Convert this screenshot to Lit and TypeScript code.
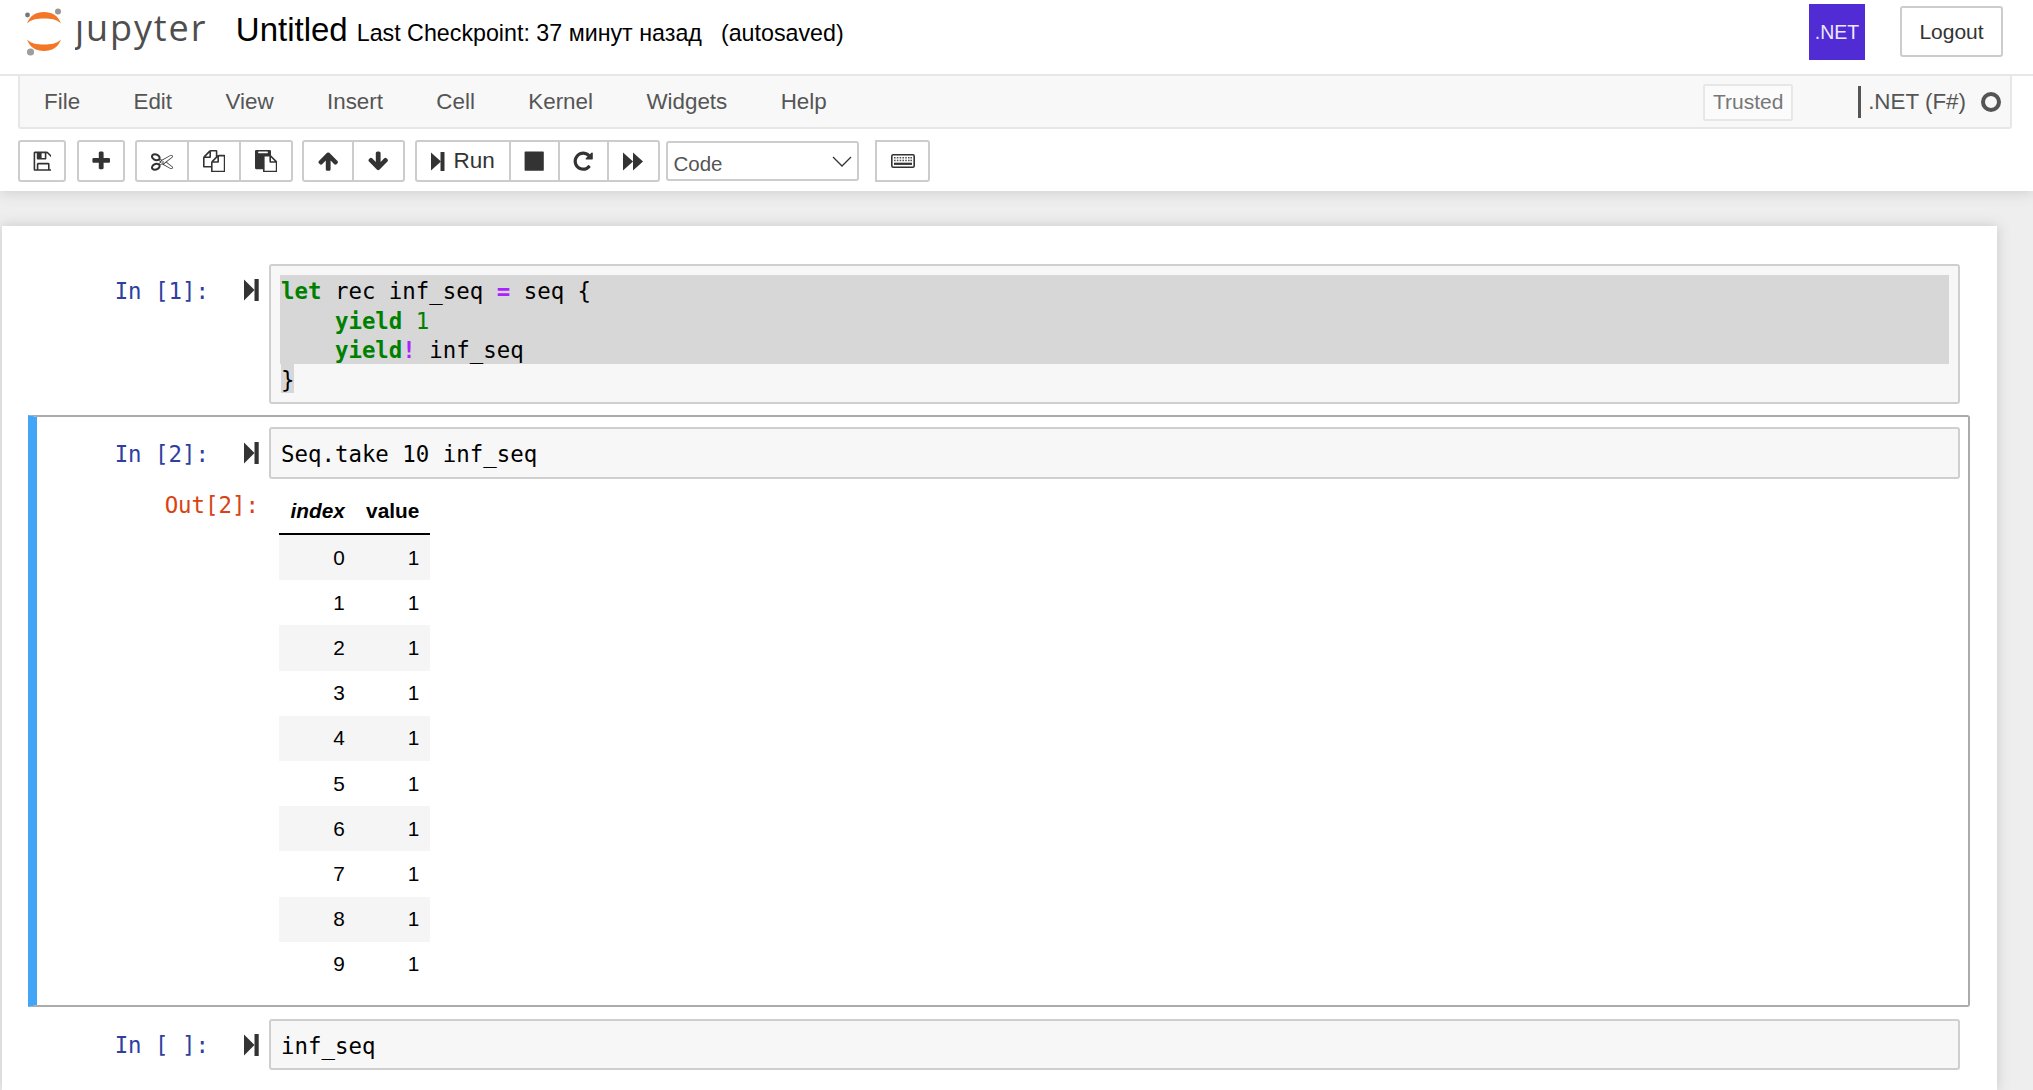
import { LitElement, html, css, svg } from "lit";
import { customElement } from "lit/decorators.js";

const ICONS = {
  save: { vb: "0 0 1536 1792", w: 19.2, d: "M512 1536h768v-384h-768v384zm896 0h128v-896q0-14-10-38.5t-20-34.5l-281-281q-10-10-34-20t-39-10v416q0 40-28 68t-68 28h-576q-40 0-68-28t-28-68v-416h-128v1280h128v-416q0-40 28-68t68-28h832q40 0 68 28t28 68v416zm-384-928v-320q0-13-9.5-22.5t-22.5-9.5h-192q-13 0-22.5 9.5t-9.5 22.5v320q0 13 9.5 22.5t22.5 9.5h192q13 0 22.5-9.5t9.5-22.5zm640 32v928q0 40-28 68t-68 28h-1344q-40 0-68-28t-28-68v-1344q0-40 28-68t68-28h928q40 0 88 20t76 48l280 280q28 28 48 76t20 88z" },
  plus: { vb: "0 0 1792 1792", w: 22.4, d: "M1600 736v192q0 40-28 68t-68 28h-416v416q0 40-28 68t-68 28h-192q-40 0-68-28t-28-68v-416h-416q-40 0-68-28t-28-68v-192q0-40 28-68t68-28h416v-416q0-40 28-68t68-28h192q40 0 68 28t28 68v416h416q40 0 68 28t28 68z" },
  cut: { vb: "0 0 1792 1792", w: 22.4, d: "M960 896q26 0 45 19t19 45-19 45-45 19-45-19-19-45 19-45 45-19zm300 64l507 398q28 20 25 56-5 35-35 51l-128 64q-13 7-29 7-17 0-31-8l-690-387-110 66q-8 4-12 5 14 49 10 97-7 77-56 147.5t-132 123.5q-132 84-277 84-136 0-222-78-90-84-79-207 7-76 56-147t131-124q132-84 278-84 83 0 151 31 9-13 22-22l122-73-122-73q-13-9-22-22-68 31-151 31-146 0-278-84-82-53-131-124t-56-147q-5-59 15.5-113t63.5-93q85-79 222-79 145 0 277 84 83 52 132 123t56 148q4 48-10 97 4 1 12 5l110 66 690-387q14-8 31-8 16 0 29 7l128 64q30 16 35 51 3 36-25 56zm-681-260q46-42 21-108t-106-117q-92-59-192-59-74 0-113 36-46 42-21 108t106 117q92 59 192 59 74 0 113-36zm-85 745q81-51 106-117t-21-108q-39-36-113-36-100 0-192 59-81 51-106 117t21 108q39 36 113 36 100 0 192-59zm178-613l96 58v-11q0-36 33-56l14-8-79-47-26 26q-3 3-10 11t-12 12q-2 2-4 3.5t-3 2.5zm224 224l96 32 736-576-128-64-768 431v113l-160 96 9 8q2 2 7 6 4 4 11 12t11 12l26 26zm704 416l128-64-520-408-177 138q-2 3-13 7z" },
  copy: { vb: "0 0 1792 1792", w: 22.4, d: "M1696 384q40 0 68 28t28 68v1216q0 40-28 68t-68 28h-960q-40 0-68-28t-28-68v-288h-544q-40 0-68-28t-28-68v-672q0-40 20-88t48-76l408-408q28-28 76-48t88-20h416q40 0 68 28t28 68v328q68-40 128-40h416zm-544 213l-299 299h299v-299zm-640-384l-299 299h299v-299zm196 647l316-316v-416h-384v416q0 40-28 68t-68 28h-416v640h512v-256q0-40 20-88t48-76zm956 804v-1152h-384v416q0 40-28 68t-68 28h-416v640h896z" },
  paste: { vb: "0 0 1792 1792", w: 22.4, d: "M768 1664h896v-640h-416q-40 0-68-28t-28-68v-416h-384v1152zm256-1440v-64q0-13-9.5-22.5t-22.5-9.5h-704q-13 0-22.5 9.5t-9.5 22.5v64q0 13 9.5 22.5t22.5 9.5h704q13 0 22.5-9.5t9.5-22.5zm256 672h299l-299-299v299zm512 128v672q0 40-28 68t-68 28h-960q-40 0-68-28t-28-68v-160h-544q-40 0-68-28t-28-68v-1344q0-40 28-68t68-28h1088q40 0 68 28t28 68v328q21 13 36 28l408 408q28 28 48 76t20 88z" },
  up: { vb: "0 0 1792 1792", w: 22.4, d: "M1675 971q0 51-37 90l-75 75q-38 38-91 38-54 0-90-38l-294-293v704q0 52-37.5 84.5t-90.5 32.5h-128q-53 0-90.5-32.5t-37.5-84.5v-704l-294 293q-36 38-90 38t-90-38l-75-75q-38-38-38-90 0-53 38-91l651-651q35-37 90-37 54 0 91 37l651 651q37 39 37 91z" },
  down: { vb: "0 0 1792 1792", w: 22.4, d: "M1675 832q0 53-37 90l-651 652q-39 37-91 37-53 0-90-37l-651-652q-38-36-38-90 0-53 38-91l74-75q39-37 91-37 53 0 90 37l294 294v-704q0-52 38-90t90-38h128q52 0 90 38t38 90v704l294-294q37-37 90-37 52 0 91 37l75 75q37 39 37 91z" },
  stop: { vb: "0 0 1792 1792", w: 22.4, d: "M1664 192v1408q0 26-19 45t-45 19h-1408q-26 0-45-19t-19-45v-1408q0-26 19-45t45-19h1408q26 0 45 19t19 45z" },
  repeat: { vb: "0 0 1792 1792", w: 22.4, d: "M1664 256v448q0 26-19 45t-45 19h-448q-42 0-59-40-17-39 14-69l138-138q-148-137-349-137-104 0-198.5 40.5t-163.5 109.5-109.5 163.5-40.5 198.5 40.5 198.5 109.5 163.5 163.5 109.5 198.5 40.5q119 0 225-52t179-147q7-10 23-12 15 0 25 9l137 138q9 8 9.5 20.5t-7.5 22.5q-109 132-264 204.5t-327 72.5q-156 0-298-61t-245-164-164-245-61-298 61-298 164-245 245-164 298-61q147 0 284.5 55.5t244.5 156.5l130-129q29-31 70-14 39 17 39 59z" },
};

const icon = (k: keyof typeof ICONS) => {
  const i = ICONS[k];
  return html`<svg class="ic" width=${i.w} height="22.4" viewBox=${i.vb} fill="#333"><path d=${i.d} /></svg>`;
};

const step = () => html`<svg class="ic" width="14" height="19" viewBox="0 0 14 19" fill="#333"><path d="M0 .5 10 9.5 0 18.5z"/><rect x="9.5" y="0" width="4" height="19" rx=".6"/></svg>`;

const forward = () => html`<svg class="ic" width="20" height="19" viewBox="0 0 20 19" fill="#333"><path d="M0 .5 10 9.500 0 18.500zM10 .5 20 9.500 10 18.500z"/></svg>`;

const keyboard = () => html`<svg class="ic" width="24" height="14" viewBox="0 0 24 14">
  <rect x=".8" y=".8" width="22.400" height="12.400" rx="1.400" fill="#fff" stroke="#333" stroke-width="1.600"/>
  ${[3, 5.8, 8.6, 11.4, 14.2, 17, 19.4].map((x) => svg`<rect x=${x} y="3" width="1.600" height="1.500" fill="#555"/><rect x=${x} y="5.700" width="1.600" height="1.500" fill="#555"/>`)}
  <rect x="3" y="8.700" width="18" height="2.200" fill="#333"/>
</svg>`;

const runIcon = () => html`<svg class="run" width="15" height="22" viewBox="0 0 15 22" fill="#333"><path d="M0 .6 10.5 11 0 21.4z"/><rect x="10.5" y="0" width="4.2" height="22"/></svg>`;

const ROWS = [0, 1, 2, 3, 4, 5, 6, 7, 8, 9];

@customElement("app-root")
export class AppRoot extends LitElement {
  static styles = css`
    :host { display: block; height: 100vh; overflow: hidden; background: #eee; font-family: "Liberation Sans", Arial, sans-serif; color: #000; }
    .top { background: #fff; box-shadow: 0 0 14px rgba(87,87,87,.25); position: relative; padding-bottom: 9px; }
    .header { height: 74px; display: flex; align-items: flex-start; padding-right: 30px; }
    .logo { display: block; margin: 8px 0 0 24px; }
    .brand { font-family: "Open Sans", sans-serif; font-size: 36px; letter-spacing: 1.900px; color: #4e4e4e; line-height: 46px; margin: 4.500px 0 0 11px; display: flex; }
    .j { clip-path: inset(16px 0 0 0); }
    .title { font-size: 33px; line-height: 40px; margin: 10px 0 0 28.500px; color: #000; }
    .ckpt { font-size: 23.250px; line-height: 40px; margin: 13px 0 0 9px; white-space: pre; }
    .saved { margin-left: 19px; }
    .net { width: 56px; height: 56px; margin: 4px 0 0 auto; background: #512bd4; color: #ece8fb; font-size: 19.500px; display: flex; align-items: center; justify-content: center; }
    .logout { width: 103px; height: 51px; box-sizing: border-box; margin: 6px 0 0 35px; border: 2px solid #ccc; border-radius: 3px; font-size: 21px; color: #333; display: flex; align-items: center; justify-content: center; }
    .line { height: 2px; background: #e7e7e7; }
    .menubar { height: 53px; box-sizing: border-box; margin: 0 21px 0 17.500px; background: #f8f8f8; border: 2px solid #e7e7e7; border-top: 0; border-radius: 0 0 3px 3px; display: flex; align-items: center; font-size: 22.400px; color: #555; }
    .menu { display: flex; margin-left: -2.200px; }
    .menu span { padding: 0 26.700px; }
    .trusted { margin-left: auto; width: 90px; height: 37px; box-sizing: border-box; border: 2px solid #e7e7e7; border-radius: 2px; background: #fbfbfb; font-size: 21px; color: #777; display: flex; align-items: center; justify-content: center; margin-top: 1px; }
    .kernel { display: flex; align-items: center; margin-left: 64.500px; height: 32px; border-left: 3px solid #555; padding-left: 7.500px; margin-top: 1px; }
    .circle { width: 20px; height: 20px; box-sizing: border-box; border: 4px solid #555; border-radius: 50%; margin: 0 9px 0 15px; }
    .toolbar { display: flex; align-items: flex-start; padding: 11px 0 0 17.500px; }
    .grp { display: flex; }
    .g1 { margin-right: 10.500px; } .g2 { margin-right: 10px; } .g3 { margin-right: 9px; } .g4 { margin-right: 10.700px; } .g5 { margin-right: 6.300px; }
    .btn { height: 42px; box-sizing: border-box; border: 2px solid #ccc; background: #fff; display: flex; align-items: center; justify-content: center; margin-left: -2px; color: #333; font-size: 22.500px; }
    .btn:first-child { margin-left: 0; border-radius: 3px 0 0 3px; }
    .btn:last-child { border-radius: 0 3px 3px 0; }
    .btn:only-child { border-radius: 3px; }
    .w48 { width: 48.500px; } .w54 { width: 54px; } .w52 { width: 52.250px; } .w51 { width: 51px; } .w53 { width: 53.500px; } .w95 { width: 95.500px; gap: 8.500px; }
    .ic { display: block; }
    .select { width: 193px; height: 40px; box-sizing: border-box; margin: 1px 0 0 0; border: 2px solid #ccc; border-radius: 3px; background: #fff; color: #555; font-size: 20.500px; display: flex; align-items: center; justify-content: space-between; padding: 6px 5px 0 5px; }
    .chev { margin-top: -6px; }
    .kb { margin-left: 15.500px; width: 55.500px; border-radius: 3px; }
    .site { flex: 1; padding-top: 35px; }
    .wrap { display: flex; flex-direction: column; height: 100%; }
    .nb { height: 100%; margin: 0 36px 0 2px; background: #fff; box-shadow: 0 0 12px rgba(87,87,87,.25); padding: 26px 27px 0 26px; box-sizing: border-box; }
    .cell { border: 2px solid transparent; border-left-width: 9px; padding: 10px 8px 9px 10px; border-radius: 3px; }
    .cell.sel { border-color: #ababab; border-left-color: #42a5f5; border-radius: 0 3px 3px 0; padding-bottom: 18px; }
    .row { display: flex; align-items: flex-start; }
    .mono { font-family: "DejaVu Sans Mono", monospace; font-size: 22.400px; line-height: 29.500px; }
    .prompt { width: 162px; flex: none; text-align: right; color: #303f9f; padding-top: 12.500px; white-space: pre; }
    .run { flex: none; margin: 15px 10px 0 35px; display: block; }
    .input { flex: 1; min-width: 0; border: 2px solid #cfcfcf; border-radius: 3px; background: #f7f7f7; padding: 9px; color: #000; white-space: pre; }
    .ln { padding-left: 1px; padding-top: 3px; line-height: 26.500px; }
    .last { padding-top: 0; }
    .sl { background: #d7d7d7; }
    .inl { display: inline-block; padding-top: 3px; }
    .k { color: #008000; font-weight: bold; }
    .n { color: #008000; }
    .o { color: #aa22ff; font-weight: bold; }
    .output { display: flex; align-items: flex-start; padding-top: 10.500px; }
    .oprompt { width: 212px; flex: none; text-align: right; color: #d84315; padding-top: 1.500px; }
    table { border-collapse: collapse; margin-left: 20px; font-size: 20.800px; color: #000; }
    th { height: 44px; padding: 0 10.600px; text-align: right; font-weight: bold; border-bottom: 2px solid #000; }
    th.i { font-style: italic; }
    td { height: 45.200px; padding: 0 10.600px; text-align: right; }
    th.i, td:first-child { padding-left: 11.600px; }
    tr:nth-child(odd) td { background: #f5f5f5; }
  `;

  private cellRow(prompt: string, content: unknown) {
    return html`<div class="row">
      <div class="prompt mono">${prompt}</div>
      ${runIcon()}
      <div class="input mono">${content}</div>
    </div>`;
  }

  render() {
    return html`<div class="wrap">
      <div class="top">
        <div class="header">
          <svg class="logo" width="40" height="50" viewBox="0 0 40 50">
            <path d="M3 15.5C6 7.5 12 4 20 4s14 3.500 17 11.500C32 11 27 10.500 20 10.500S8 11 3 15.500z" fill="#f37726"/>
            <path d="M3 31.500C6 39.500 12 43 20 43s14-3.500 17-11.500C32 36 27 36.500 20 36.500S8 36 3 31.500z" fill="#f37726"/>
            <circle cx="3.500" cy="7" r="2.400" fill="#767677"/>
            <circle cx="34" cy="3.500" r="3" fill="#989798"/>
            <circle cx="6.500" cy="44" r="3.600" fill="#9e9e9e"/>
          </svg>
          <div class="brand"><span class="j">j</span><span>upyter</span></div>
          <div class="title">Untitled</div>
          <div class="ckpt">Last Checkpoint: 37 минут назад<span class="saved">(autosaved)</span></div>
          <div class="net">.NET</div>
          <div class="logout">Logout</div>
        </div>
        <div class="line"></div>
        <div class="menubar">
          <div class="menu">
            <span>File</span><span>Edit</span><span>View</span><span>Insert</span><span>Cell</span><span>Kernel</span><span>Widgets</span><span>Help</span>
          </div>
          <div class="trusted">Trusted</div>
          <div class="kernel">.NET (F#)<div class="circle"></div></div>
        </div>
        <div class="toolbar">
          <div class="grp g1"><div class="btn w48">${icon("save")}</div></div>
          <div class="grp g2"><div class="btn w48">${icon("plus")}</div></div>
          <div class="grp g3">
            <div class="btn w54">${icon("cut")}</div>
            <div class="btn w54">${icon("copy")}</div>
            <div class="btn w54">${icon("paste")}</div>
          </div>
          <div class="grp g4">
            <div class="btn w52">${icon("up")}</div>
            <div class="btn w52">${icon("down")}</div>
          </div>
          <div class="grp g5">
            <div class="btn w95">${step()}<span>Run</span></div>
            <div class="btn w51">${icon("stop")}</div>
            <div class="btn w51">${icon("repeat")}</div>
            <div class="btn w53">${forward()}</div>
          </div>
          <div class="select"><span>Code</span>
            <svg class="chev" width="20" height="11" viewBox="0 0 20 11" fill="none" stroke="#333" stroke-width="1.300"><path d="M1 1l9 9 9-9"/></svg>
          </div>
          <div class="btn kb">${keyboard()}</div>
        </div>
      </div>
      <div class="site">
        <div class="nb">
          <div class="cell">
            ${this.cellRow("In [1]:", html`<div class="ln sl"><span class="k">let</span> rec inf_seq <span class="o">=</span> seq {</div><div class="ln sl">    <span class="k">yield</span> <span class="n">1</span></div><div class="ln sl">    <span class="k">yield</span><span class="o">!</span> inf_seq</div><div class="ln last"><span class="sl inl">}</span></div>`)}
          </div>
          <div class="cell sel">
            ${this.cellRow("In [2]:", html`<div class="ln">Seq.take 10 inf_seq</div>`)}
            <div class="output">
              <div class="oprompt mono">Out[2]:</div>
              <table>
                <thead><tr><th class="i">index</th><th>value</th></tr></thead>
                <tbody>${ROWS.map((r) => html`<tr><td>${r}</td><td>1</td></tr>`)}</tbody>
              </table>
            </div>
          </div>
          <div class="cell">
            ${this.cellRow("In [ ]:", html`<div class="ln">inf_seq</div>`)}
          </div>
        </div>
      </div>
    </div>`;
  }
}
